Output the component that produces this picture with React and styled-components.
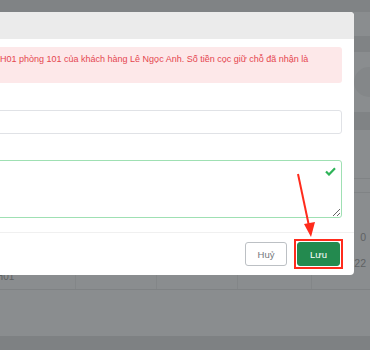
import React from "react";
import styled, { createGlobalStyle } from "styled-components";

const GlobalStyle = createGlobalStyle`
  html, body { margin: 0; padding: 0; }
  body { font-family: "Liberation Sans", Arial, sans-serif; }
`;

const Page = styled.div`
  position: relative;
  width: 370px;
  height: 350px;
  overflow: hidden;
  background: #8a8d8f;
  display: flex;
  flex-direction: column;
`;

const Band = styled.div`
  height: ${(p) => p.$h}px;
  flex: none;
  background: ${(p) => (p.$dark ? "#808385" : "transparent")};
  border-bottom: ${(p) => (p.$line ? "1px solid #808385" : "none")};
  display: flex;
  justify-content: flex-end;
  align-items: center;
`;

const Avatar = styled.div`
  width: 30px;
  height: 30px;
  border-radius: 50%;
  background: #848789;
  margin-right: -14px;
`;

const TableRow = styled.div`
  height: ${(p) => p.$h}px;
  flex: none;
  display: grid;
  grid-template-columns: 76px 81px 81px 74px 1fr;
  border-bottom: 1px solid #7f8284;
`;

const Cell = styled.div`
  border-right: 1px solid #838688;
  display: flex;
  flex-direction: column;
  justify-content: flex-end;
  align-items: ${(p) => (p.$right ? "flex-end" : "flex-start")};
  gap: 14px;
  padding: 0 ${(p) => (p.$right ? 4 : 0)}px ${(p) => (p.$right ? 20 : 7)}px 0;
  font-size: ${(p) => (p.$right ? 10.5 : 10)}px;
  color: #5f6264;
  &:last-child { border-right: none; }
`;

const LeftCell = styled(Cell)`
  margin-left: -4px;
`;

const Filler = styled.div`
  flex: 1;
`;

const BottomBand = styled.div`
  height: 14px;
  flex: none;
  background: #7e8183;
`;

const Modal = styled.div`
  position: absolute;
  top: 12px;
  left: -30px;
  width: 384px;
  background: #ffffff;
  border-radius: 4px;
  overflow: hidden;
  display: flex;
  flex-direction: column;
`;

const Header = styled.div`
  height: 27px;
  background: #ebebeb;
`;

const Body = styled.div`
  padding: 8px 12px 14px 12px;
  display: flex;
  flex-direction: column;
`;

const Alert = styled.div`
  height: 36px;
  box-sizing: border-box;
  background: #fde8e9;
  border-radius: 3px;
  padding: 6px 10px 0 18px;
  color: #e5464f;
  font-size: 9px;
  line-height: 13px;
  white-space: nowrap;
`;

const Field = styled.div`
  position: relative;
  margin-top: ${(p) => p.$mt}px;
`;

const Input = styled.input`
  display: block;
  width: 100%;
  height: 24px;
  box-sizing: border-box;
  border: 1px solid #e0e2e6;
  border-radius: 3px;
  background: #fff;
  outline: none;
`;

const TextArea = styled.textarea`
  display: block;
  width: 100%;
  height: 58px;
  box-sizing: border-box;
  border: 1px solid #9fe0b3;
  border-radius: 3px;
  background: #fff;
  outline: none;
  resize: vertical;
`;

const Check = styled.svg`
  position: absolute;
  top: 7px;
  right: 6px;
`;

const Footer = styled.div`
  height: 43px;
  box-sizing: border-box;
  border-top: 1px solid #f0f0f0;
  display: flex;
  justify-content: flex-end;
  align-items: center;
  gap: 7px;
  padding-right: 11px;
`;

const Button = styled.button`
  height: 24px;
  width: ${(p) => p.$w}px;
  box-sizing: border-box;
  border-radius: 3px;
  font-family: "Liberation Sans", Arial, sans-serif;
  font-size: 9.5px;
  padding: 0;
  cursor: pointer;
  border: 1px solid ${(p) => (p.$primary ? "#238a4f" : "#bcc0c4")};
  background: ${(p) => (p.$primary ? "#238a4f" : "#ffffff")};
  color: ${(p) => (p.$primary ? "#ffffff" : "#74787c")};
`;

const Highlight = styled.div`
  border: 2px solid #ff2b1c;
  padding: 1px;
  display: flex;
`;

const Arrow = styled.svg`
  position: absolute;
  left: 0;
  top: 0;
  pointer-events: none;
`;

export default function App() {
  return (
    <>
      <GlobalStyle />
      <Page>
        <Band $h={12} $dark />
        <Band $h={24} />
        <Band $h={16} $dark />
        <Band $h={60}>
          <Avatar />
        </Band>
        <Band $h={18} $dark />
        <Band $h={48} $line />
        <Band $h={13} $line />
        <TableRow $h={96}>
          <LeftCell>
            <span>H01</span>
          </LeftCell>
          <Cell />
          <Cell />
          <Cell />
          <Cell $right>
            <span>0</span>
            <span>22</span>
          </Cell>
        </TableRow>
        <Filler />
        <BottomBand />

        <Modal>
          <Header />
          <Body>
            <Alert>
              H01 phòng 101 của khách hàng Lê Ngọc Anh. Số tiền cọc giữ chỗ đã nhận là
            </Alert>
            <Field $mt={27}>
              <Input type="text" />
            </Field>
            <Field $mt={26}>
              <TextArea />
              <Check width="11" height="9" viewBox="0 0 11 9">
                <polyline
                  points="1,4.5 4,7.5 10,1.2"
                  fill="none"
                  stroke="#2eb358"
                  strokeWidth="2.2"
                />
              </Check>
            </Field>
          </Body>
          <Footer>
            <Button $w={42}>Huỷ</Button>
            <Highlight>
              <Button $w={43} $primary>
                Lưu
              </Button>
            </Highlight>
          </Footer>
        </Modal>

        <Arrow width="370" height="350" viewBox="0 0 370 350">
          <line x1="298" y1="174" x2="309" y2="226" stroke="#ff2b1c" strokeWidth="2" />
          <polygon points="311,237 304,224 315,222" fill="#ff2b1c" />
        </Arrow>
      </Page>
    </>
  );
}
